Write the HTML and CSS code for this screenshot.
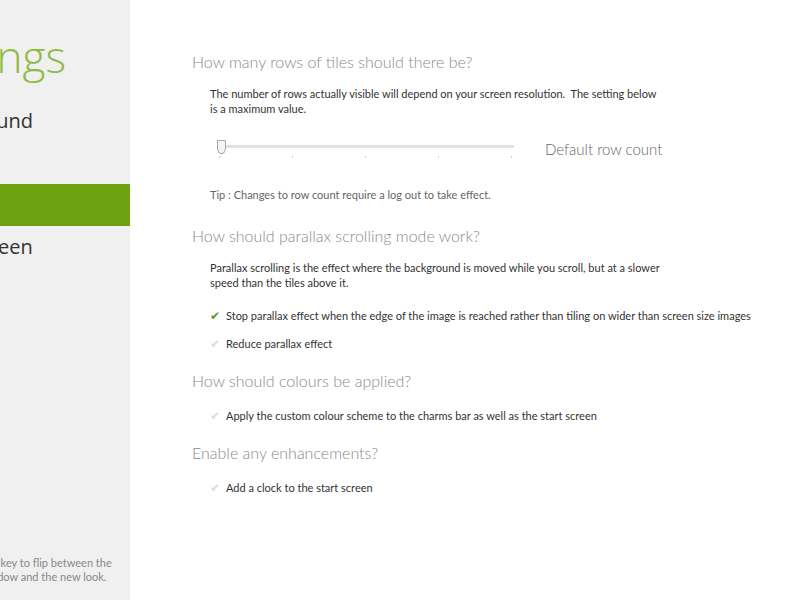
FILE: index.html
```html
<!DOCTYPE html>
<html lang="en">
<head>
    <meta charset="UTF-8">
    <title>Settings</title>
    <link rel="stylesheet" href="styles.css">
</head>
<body>

<div class="page">
    <aside class="sidebar">
        <div class="sidebar-inner">
            <h1 class="title">Settings</h1>
            <ul class="nav">
                <li>Background</li>
                <li class="spacer"></li>
                <li class="selected">Tiles</li>
                <li>Start screen</li>
            </ul>
            <p class="hint">Press the Windows key to flip between the<br>classic desktop window and the new look.</p>
        </div>
    </aside>

    <main class="content">
        <section class="group">
            <h2>How many rows of tiles should there be?</h2>
            <p class="desc">The number of rows actually visible will depend on your screen resolution.&nbsp; The setting below<br>is a maximum value.</p>
            <div class="slider-row">
                <div class="slider">
                    <div class="track"></div>
                    <div class="thumb"></div>
                    <div class="ticks">
                        <span></span><span></span><span></span><span></span><span></span>
                    </div>
                </div>
                <span class="slider-label">Default row count</span>
            </div>
            <p class="tip">Tip : Changes to row count require a log out to take effect.</p>
        </section>

        <section class="group">
            <h2>How should parallax scrolling mode work?</h2>
            <p class="desc">Parallax scrolling is the effect where the background is moved while you scroll, but at a slower<br>speed than the tiles above it.</p>
            <div class="option checked"><span class="tick">&#10004;</span>Stop parallax effect when the edge of the image is reached rather than tiling on wider than screen size images</div>
            <div class="option"><span class="tick">&#10004;</span>Reduce parallax effect</div>
        </section>

        <section class="group">
            <h2>How should colours be applied?</h2>
            <div class="option"><span class="tick">&#10004;</span>Apply the custom colour scheme to the charms bar as well as the start screen</div>
        </section>

        <section class="group">
            <h2>Enable any enhancements?</h2>
            <div class="option"><span class="tick">&#10004;</span>Add a clock to the start screen</div>
        </section>
    </main>
</div>

</body>
</html>
```

FILE: styles.css
```css
body {
    font-family: Lato, 'Open Sans', sans-serif;
    background: white;
    margin: 0;
    padding: 0;
    color: #333;
}

.page {
    display: flex;
    height: 600px;
}

/* left navigation pane, scrolled so only the tail of each label shows */
.sidebar {
    width: 130px;
    flex-shrink: 0;
    background: #f0f0f0;
    overflow: hidden;
}

.sidebar-inner {
    width: 260px;
    height: 100%;
    margin-left: -130px;
    display: flex;
    flex-direction: column;
}

.title {
    font-family: 'Open Sans', sans-serif;
    font-weight: 300;
    font-size: 44px;
    color: #8dbb45;
    margin: 26px 0 0 39px;
    line-height: 60px;
}

.nav {
    list-style: none;
    margin: 14px 0 0;
    padding: 0;
}

.nav li {
    font-family: 'Open Sans', sans-serif;
    font-size: 20px;
    line-height: 42px;
    height: 42px;
    padding-left: 51px;
    color: #333;
}

.nav li.selected {
    background: #6ea10f;
    color: white;
    padding-left: 0;
}

.hint {
    margin: auto 0 16px 0;
    padding-left: 35px;
    white-space: nowrap;
    font-size: 11px;
    line-height: 14px;
    color: #888;
}

/* settings column */
.content {
    padding: 50px 0 0 62px;
    flex: 1;
}

.group {
    margin-bottom: 18px;
}

.group h2 {
    font-weight: 300;
    font-size: 16px;
    color: #8a8a8a;
    margin: 0 0 12px;
    line-height: 24px;
}

.desc,
.tip {
    font-size: 11px;
    line-height: 15px;
    margin: 0 0 18px 18px;
    color: #333;
}

.tip {
    color: #666;
    margin-top: 25px;
    margin-bottom: 22px;
}

.slider-row {
    display: flex;
    align-items: center;
    margin: 24px 0 0 25px;
}

.slider {
    position: relative;
    width: 297px;
    height: 22px;
}

.track {
    margin-top: 5px;
    height: 3px;
    background: #e2e2e2;
}

/* thumb is a small shield pointing down at the track */
.thumb {
    position: absolute;
    left: 0;
    top: 0;
    width: 7px;
    height: 12px;
    background: #f4f4f4;
    border: 1px solid #a8a8a8;
    border-radius: 1px 1px 4px 4px / 1px 1px 6px 6px;
}

.ticks {
    display: flex;
    justify-content: space-between;
    padding: 0 2px;
    margin-top: 8px;
}

.ticks span {
    width: 1px;
    height: 2px;
    background: #ccc;
}

.slider-label {
    margin-left: 31px;
    font-size: 15px;
    font-weight: 300;
    white-space: nowrap;
    color: #666;
    margin-top: -4px;
}

.option {
    font-size: 11px;
    margin: 0 0 13px 18px;
    line-height: 15px;
    white-space: nowrap;
    display: flex;
    align-items: center;
}

.group h2 + .option {
    margin-top: 15px;
}

.tick {
    width: 16px;
    flex-shrink: 0;
    font-size: 12px;
    color: #ddd;
}

.option.checked .tick {
    color: #5a9a1e;
}
```
